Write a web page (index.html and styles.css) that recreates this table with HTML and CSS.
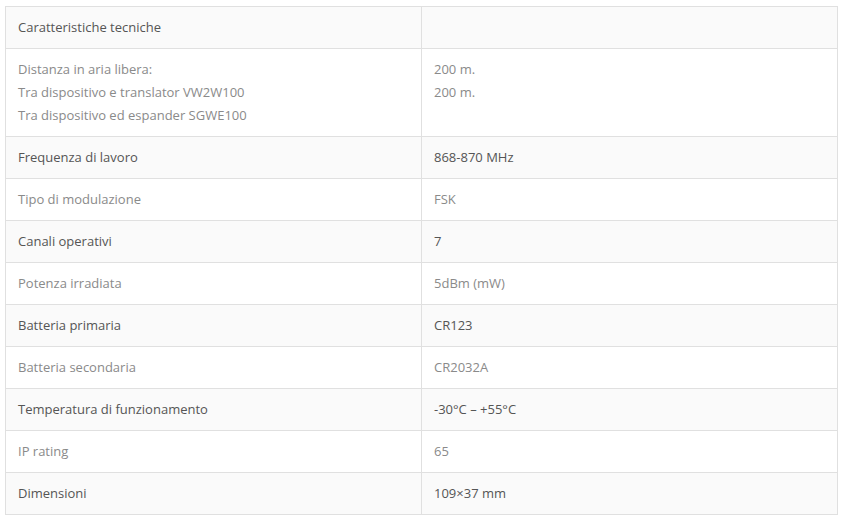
FILE: index.html
```html
<!DOCTYPE html>
<html lang="it">
<head>
<meta charset="utf-8">
<link rel="stylesheet" href="styles.css">
</head>
<body>
<table class="specs">
<tbody>
<tr><td>Caratteristiche tecniche</td><td></td></tr>
<tr><td>Distanza in aria libera:<br>Tra dispositivo e translator VW2W100<br>Tra dispositivo ed espander SGWE100</td><td>200 m.<br>200 m.</td></tr>
<tr><td>Frequenza di lavoro</td><td>868-870 MHz</td></tr>
<tr><td>Tipo di modulazione</td><td>FSK</td></tr>
<tr><td>Canali operativi</td><td>7</td></tr>
<tr><td>Potenza irradiata</td><td>5dBm (mW)</td></tr>
<tr><td>Batteria primaria</td><td>CR123</td></tr>
<tr><td>Batteria secondaria</td><td>CR2032A</td></tr>
<tr><td>Temperatura di funzionamento</td><td>-30°C – +55°C</td></tr>
<tr><td>IP rating</td><td>65</td></tr>
<tr><td>Dimensioni</td><td>109×37 mm</td></tr>
</tbody>
</table>
</body>
</html>
```
FILE: styles.css
```css
html, body {
  margin: 0;
  background: #fff;
}
body {
  padding: 6px 7px 0 5px;
  font-family: "Open Sans", "Noto Sans", sans-serif;
  font-size: 13px;
  line-height: 23px;
}
.specs {
  width: 100%;
  border-collapse: collapse;
  table-layout: fixed;
  border: 1px solid #e0e0e0;
}
.specs td {
  width: 50%;
  border: 1px solid #e0e0e0;
  padding: 9px 12px;
  vertical-align: top;
  color: #8a8a8a;
  height: 23px;
}
.specs tr:nth-child(odd) td {
  background: #fafafa;
  color: #555;
}
```
